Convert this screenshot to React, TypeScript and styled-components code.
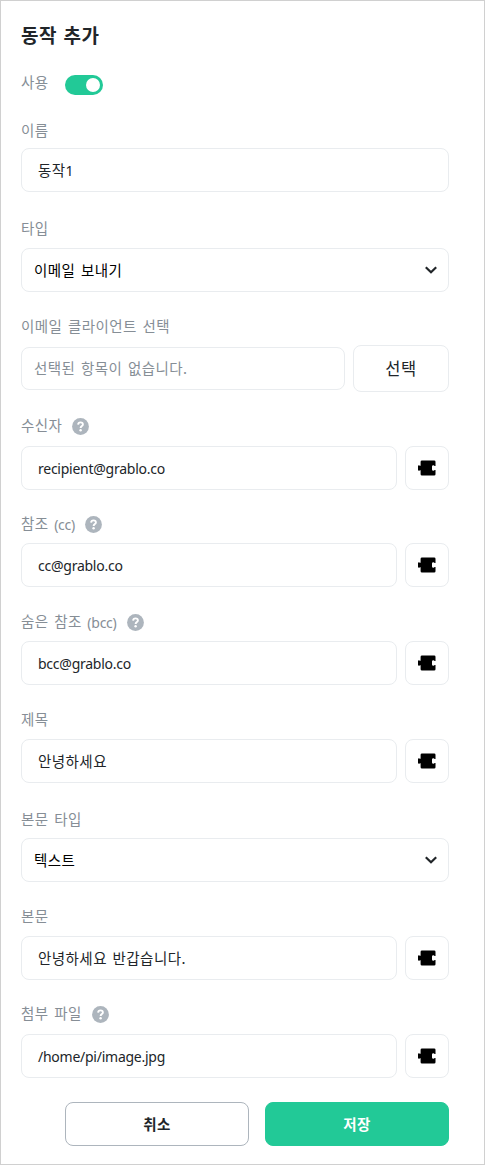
import React from "react";
import styled, { createGlobalStyle, css } from "styled-components";

const GlobalStyle = createGlobalStyle`
  *, *::before, *::after { box-sizing: border-box; }
  body { margin: 0; background: #fff; }
`;

const hangul = css`
  font-family: "Noto Sans CJK KR", sans-serif;
  letter-spacing: 0.031em;
  word-spacing: 0.13em;
`;

const latin = css`
  font-family: "Noto Sans", "Noto Sans CJK KR", sans-serif;
  font-size: 14px;
  letter-spacing: -0.018em;
  word-spacing: 0;
`;

const Dialog = styled.form`
  ${hangul}
  display: flex;
  flex-direction: column;
  width: 485px;
  height: 1165px;
  padding: 20px 35px 0 20px;
  border: 1px solid #d0d0d0;
  background: #fff;
  color: #212529;
  font-size: 14.5px;
`;

const Title = styled.h1`
  margin: 0;
  height: 28px;
  font-size: 19px;
  font-weight: 700;
  line-height: 27px;
`;

const UseRow = styled.div`
  display: flex;
  align-items: center;
  gap: 16px;
  height: 20px;
  margin-top: 25px;
`;

const Label = styled.label<{ $raise?: number }>`
  display: flex;
  align-items: center;
  height: 20px;
  padding-bottom: ${(p) => p.$raise ?? 0}px;
  color: #868e96;
  line-height: 20px;
  white-space: pre;
`;

const UseLabel = styled(Label)`
  width: 28px;
  margin-bottom: 2px;
`;

const Latin = styled.span`
  ${latin}
  margin-top: 2px;
`;

const LabelLatin = styled(Latin)`
  margin-top: 4px;
`;

const Digit = styled.span`
  ${latin}
`;

const Switch = styled.button`
  display: flex;
  justify-content: flex-end;
  width: 38px;
  height: 20px;
  margin-top: 2px;
  padding: 3px;
  border: 0;
  border-radius: 10px;
  background: #22c997;
`;

const Knob = styled.span`
  width: 14px;
  height: 14px;
  border-radius: 50%;
  background: #fff;
`;

const FieldBlock = styled.div<{ $before: number; $gap: number }>`
  display: flex;
  flex-direction: column;
  gap: ${(p) => p.$gap}px;
  margin-top: ${(p) => p.$before}px;
`;

const Controls = styled.div`
  display: flex;
  align-items: center;
  gap: 8px;
`;

const Box = styled.div<{ $inset?: number; $height?: number; $tone?: string }>`
  display: flex;
  flex: 1;
  align-items: center;
  justify-content: space-between;
  height: ${(p) => p.$height ?? 44}px;
  padding: 0 10px 0 ${(p) => p.$inset ?? 16}px;
  border: 1px solid #e9ecef;
  border-radius: 8px;
  color: ${(p) => p.$tone ?? "#212529"};
  line-height: 20px;
  white-space: pre;
`;

const PickedBox = styled(Box)`
  padding-bottom: 2px;
`;

const IconButton = styled.button`
  display: flex;
  align-items: center;
  justify-content: center;
  width: 44px;
  height: 44px;
  padding: 0;
  border: 1px solid #e9ecef;
  border-radius: 8px;
  background: #fff;
`;

const PickButton = styled.button`
  ${hangul}
  width: 96px;
  height: 47px;
  padding: 0 0 1px;
  border: 1px solid #e9ecef;
  border-radius: 8px;
  background: #fff;
  color: #212529;
  font-size: 16.5px;
`;

const HelpIcon = styled.svg`
  margin: 2px 0 0 10px;
`;

const Footer = styled.div`
  display: flex;
  gap: 16px;
  margin: 24px 0 0 44px;
`;

const ActionButton = styled.button<{ $primary?: boolean }>`
  ${hangul}
  flex: 1;
  height: 44px;
  padding: 0 0 2px;
  border: 1px solid ${(p) => (p.$primary ? "#22c997" : "#adb5bd")};
  border-radius: 8px;
  background: ${(p) => (p.$primary ? "#22c997" : "#fff")};
  color: ${(p) => (p.$primary ? "#fff" : "#212529")};
  font-size: 14.5px;
  font-weight: 700;
`;

function Help() {
  return (
    <HelpIcon width="17" height="17" viewBox="0 0 17 17" fill="none">
      <circle cx="8.5" cy="8.5" r="8.4" fill="#adb5bd" />
      <path d="M6.1 6.6C6.2 5.2 7.1 4.4 8.5 4.4S10.9 5.2 10.9 6.4C10.9 8 8.6 8.1 8.6 10" stroke="#fff" strokeWidth="1.9" />
      <circle cx="8.6" cy="12.3" r="1.2" fill="#fff" />
    </HelpIcon>
  );
}

function Puzzle() {
  return (
    <svg width="18" height="16" viewBox="0 0 18 16">
      <path d="M4 .5H16.2Q17.5 .5 17.5 1.8V6H16.6Q16.2 5.2 15.4 5.2Q14 5.2 14 6.6V9.4Q14 10.8 15.4 10.8Q16.2 10.8 16.6 10H17.5V14.2Q17.5 15.5 16.2 15.5H4Q2.6 15.5 2.6 14.2V10.2H1.8Q1.6 10.8 .9 10.8Q0 10.8 0 9.8V6.2Q0 5.2 .9 5.2Q1.6 5.2 1.8 5.8H2.6V1.8Q2.6 .5 4 .5Z" />
    </svg>
  );
}

function Chevron() {
  return (
    <svg width="14" height="8" viewBox="0 0 14 8" fill="none">
      <path d="M1.8 1.2L7 6.2L12.2 1.2" stroke="#212529" strokeWidth="2.2" />
    </svg>
  );
}

type FieldProps = {
  label: React.ReactNode;
  before: number;
  gap: number;
  help?: boolean;
  children: React.ReactNode;
};

function Field({ label, before, gap, help, children }: FieldProps) {
  return (
    <FieldBlock $before={before} $gap={gap}>
      <Label $raise={help ? 2 : 0}>
        {label}
        {help && <Help />}
      </Label>
      <Controls>{children}</Controls>
    </FieldBlock>
  );
}

function BlockInput({ children }: { children: React.ReactNode }) {
  return (
    <>
      <Box>{children}</Box>
      <IconButton type="button">
        <Puzzle />
      </IconButton>
    </>
  );
}

export default function App() {
  return (
    <>
      <GlobalStyle />
      <Dialog>
        <Title>동작 추가</Title>
        <UseRow>
          <UseLabel $raise={2}>사용</UseLabel>
          <Switch type="button">
            <Knob />
          </Switch>
        </UseRow>
        <Field label="이름" before={26} gap={8}>
          <Box><span>동작<Digit>1</Digit></span></Box>
        </Field>
        <Field label="타입" before={26} gap={10}>
          <Box $inset={12} $tone="#000">이메일 보내기<Chevron /></Box>
        </Field>
        <Field label="이메일 클라이언트 선택" before={24} gap={9}>
          <PickedBox $inset={12} $height={43} $tone="#868e96">선택된 항목이 없습니다.</PickedBox>
          <PickButton type="button">선택</PickButton>
        </Field>
        <Field label="수신자" before={24} gap={10} help>
          <BlockInput><Latin>recipient@grablo.co</Latin></BlockInput>
        </Field>
        <Field label={<>참조 <LabelLatin>(cc)</LabelLatin></>} before={24} gap={9} help>
          <BlockInput><Latin>cc@grablo.co</Latin></BlockInput>
        </Field>
        <Field label={<>숨은 참조 <LabelLatin>(bcc)</LabelLatin></>} before={25} gap={9} help>
          <BlockInput><Latin>bcc@grablo.co</Latin></BlockInput>
        </Field>
        <Field label="제목" before={24} gap={10}>
          <BlockInput>안녕하세요</BlockInput>
        </Field>
        <Field label="본문 타입" before={26} gap={9}>
          <Box $inset={12} $tone="#000">텍스트<Chevron /></Box>
        </Field>
        <Field label="본문" before={24} gap={10}>
          <BlockInput>안녕하세요 반갑습니다.</BlockInput>
        </Field>
        <Field label="첨부 파일" before={24} gap={10} help>
          <BlockInput><Latin>/home/pi/image.jpg</Latin></BlockInput>
        </Field>
        <Footer>
          <ActionButton type="button">취소</ActionButton>
          <ActionButton type="button" $primary>저장</ActionButton>
        </Footer>
      </Dialog>
    </>
  );
}
